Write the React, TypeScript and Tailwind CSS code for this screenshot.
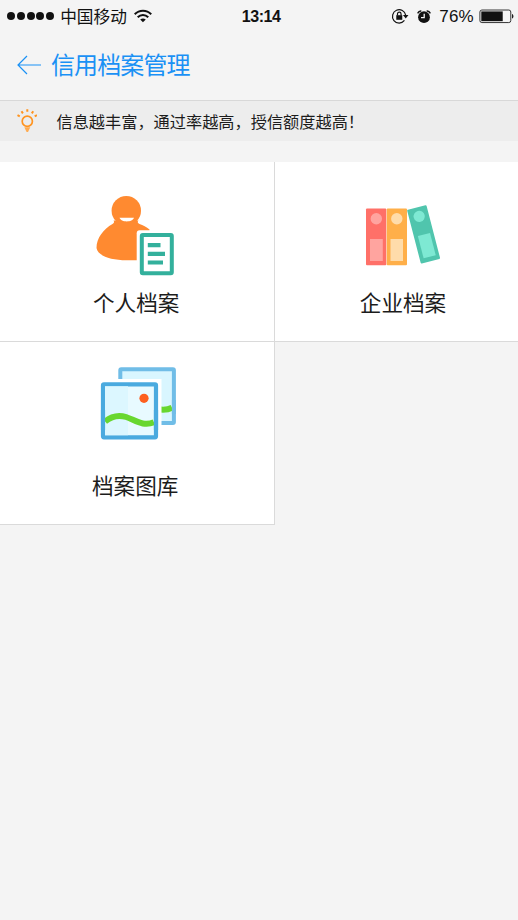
import type { ReactNode } from "react";

const PersonIcon = () => (
  <svg width="82" height="84" viewBox="94 194 82 84" fill="none">
    <circle cx="126.300" cy="210.700" r="14.700" fill="#ff8a30" />
    <path d="M113.500 220.500c1 1.500.5 2.500-1 3.500-9 5-16 14-16 24 1 7.500 14 12.300 30 12.300h23V229.500c-3-2.500-6.500-4.500-10-5.500-2-1-2.200-2-1-3.500z" fill="#ff8a30" />
    <path d="M119.500 217.700h14.500c-1.500 4.900-13 4.900-14.500 0z" fill="#fff" />
    <rect x="136.700" y="230.300" width="42" height="50" rx="3" fill="#fff" />
    <rect x="141.800" y="234.900" width="30" height="38.400" rx="1" fill="#fff" stroke="#33b09c" strokeWidth="4" strokeLinejoin="round" />
    <path d="M147.800 245.200h12.700M147.800 253.800h17.200M147.800 262.500h15.200" stroke="#33b09c" strokeWidth="4.200" />
  </svg>
);

const BindersIcon = () => (
  <svg width="78" height="64" viewBox="364 203 78 64">
    <rect x="366" y="208.600" width="20.300" height="56.600" rx="1" fill="#ff7068" />
    <rect x="386.700" y="208.600" width="20.300" height="56.600" rx="1" fill="#ffaf49" />
    <circle cx="376.300" cy="218.700" r="5.700" fill="#ffa49f" />
    <circle cx="396.800" cy="218.700" r="5.700" fill="#ffdcaa" />
    <rect x="370" y="239" width="12.800" height="22" fill="#ffa49f" />
    <rect x="390.500" y="239" width="12.500" height="22" fill="#ffdcaa" />
    <g transform="translate(407 210) rotate(-14.500)">
      <rect width="20" height="55.500" rx="1" fill="#50c5ad" />
      <circle cx="10.200" cy="9.300" r="5.600" fill="#7ee9d3" />
      <rect x="4" y="28" width="12.500" height="23" fill="#7ee9d3" />
    </g>
  </svg>
);

const GalleryIcon = () => (
  <svg width="78" height="76" viewBox="99 366 78 76" fill="none">
    <rect x="120.300" y="369.300" width="53.600" height="53.600" rx="1" fill="#d9f6ff" stroke="#70bde7" strokeWidth="4" />
    <path d="M158 409.300c6 1 10 .5 14-1.500" stroke="#68d72f" strokeWidth="6" />
    <path d="M173.900 400v14" stroke="#70bde7" strokeWidth="4" />
    <rect x="98" y="379" width="63.500" height="64" fill="#fff" />
    <rect x="103" y="384.300" width="53" height="53" rx="1" fill="#e8faff" stroke="#4aaadf" strokeWidth="4.200" />
    <path d="M105 386.300h23v49h-23z" fill="#dcf7ff" />
    <path d="M105.100 421.500c6-5 13-7 21-4.500 9 3 17 10 27.800 5.300" stroke="#68d72f" strokeWidth="6" />
    <path d="M103 410v20M156 410v20" stroke="#4aaadf" strokeWidth="4.200" />
    <circle cx="144" cy="398.300" r="4.600" fill="#fd601f" />
  </svg>
);

const BulbIcon = () => (
  <svg width="20" height="24" viewBox="17 109 20 24" fill="none" stroke="#ff9420">
    <circle cx="27.300" cy="121.300" r="5.100" strokeWidth="1.700" />
    <path d="M24.300 127.300h6l-2.300 4.700h-1.400z" fill="#ffac52" stroke="none" />
    <path d="M27.300 109.300v2.500M21.500 111.300l1.400 2.100M33.200 111.300l-1.400 2.100M17.500 115.200l2.300 1.200M37 115.200l-2.300 1.200" strokeWidth="2" />
  </svg>
);

const WifiIcon = () => (
  <svg width="18" height="14" viewBox="134 9 18 14" fill="none" stroke="#111" strokeWidth="2">
    <path d="M134.700 14.300c4.700-4.700 11.900-4.700 16.600 0M137.700 17.300c3-3 7.600-3 10.600 0" />
    <path d="M140.200 19.600c1.800-1.500 3.800-1.500 5.600 0L143 22.200z" fill="#111" stroke="none" />
  </svg>
);

const LockIcon = () => (
  <svg width="18" height="16" viewBox="391 8 18 16" fill="none" stroke="#111">
    <path d="M404.500 20.500a6.700 6.700 0 1 1 1.300-5.200" strokeWidth="1.200" />
    <path d="M403 15h5.500l-2.700 3.400z" fill="#111" stroke="none" />
    <rect x="396.300" y="15.200" width="6" height="4.600" fill="#111" stroke="none" />
    <path d="M397.500 15.500v-1.600a1.800 1.800 0 0 1 3.600 0v1.600" strokeWidth="1.200" />
  </svg>
);

const AlarmIcon = () => (
  <svg width="14" height="15" viewBox="417 8 14 15" fill="none">
    <circle cx="424" cy="16.200" r="5.900" fill="#111" />
    <path d="M418 11.900q.8-1.700 2.800-2M430 11.900q-.8-1.700-2.800-2" stroke="#111" strokeWidth="1.500" strokeLinecap="round" />
    <path d="M424.200 12.800v3.800h-3.200" stroke="#f4f4f4" strokeWidth="1.300" />
  </svg>
);

const BatteryIcon = () => (
  <svg width="36" height="16" viewBox="479 8 36 16" fill="none">
    <rect x="479.900" y="10" width="31" height="12.600" rx="2" stroke="#333" strokeWidth="1" />
    <rect x="481.300" y="11.400" width="21.500" height="9.800" fill="#111" />
    <path d="M512.200 14c1.800.6 1.800 4 0 4.600z" fill="#111" />
  </svg>
);

function StatusBar() {
  return (
    <div className="flex h-8 items-center pl-[7px] pr-[3px] text-[#111]">
      <div className="flex gap-[1.8px]">
        {[0, 1, 2, 3, 4].map((i) => (
          <span key={i} className="size-2 rounded-full bg-[#111]" />
        ))}
      </div>
      <span className="ml-[6px] w-[74px] text-[16.7px] leading-8 whitespace-nowrap">中国移动</span>
      <WifiIcon />
      <span className="ml-[90px] w-[150px] pt-0.5 font-['Liberation_Sans'] text-[16px] font-bold leading-8 tracking-[-0.5px]">13:14</span>
      <LockIcon />
      <span className="ml-2 flex">
        <AlarmIcon />
      </span>
      <span className="ml-2 w-[40px] pt-0.5 font-['Liberation_Sans'] text-[17px] leading-8 tracking-[0.2px]">76%</span>
      <BatteryIcon />
    </div>
  );
}

function Card({ icon, label, className }: { icon: ReactNode; label: string; className: string }) {
  return (
    <div className={`flex flex-col border-[#dadada] bg-white ${className}`}>
      {icon}
      <span className="text-[21.6px] leading-8">{label}</span>
    </div>
  );
}

export default function App() {
  return (
    <div className="h-[920px] w-[518px] overflow-hidden bg-[#f4f4f4] font-['Noto_Sans_CJK_SC',sans-serif] text-[#1c1c1c]">
      <StatusBar />

      <header className="flex h-[69px] items-center border-b border-[#d8d8d8] pl-[17px] text-[#1a91f5]">
        <svg width="24" height="20" viewBox="0 0 24 20" fill="none" stroke="currentColor" strokeWidth="1.200" className="-mt-0.5">
          <path d="M24 10H1M10 1L1 10l9 9" />
        </svg>
        <h1 className="ml-[10px] pb-1 text-[24px] leading-8 tracking-[-0.9px]">信用档案管理</h1>
      </header>

      <div className="flex h-10 items-center bg-[#ededed] pl-[17px]">
        <BulbIcon />
        <p className="ml-[19.5px] text-[16.2px] leading-6">信息越丰富，通过率越高，授信额度越高！</p>
      </div>

      <main className="mt-[21px] grid grid-cols-[275px_243px]">
        <Card icon={<PersonIcon />} label="个人档案" className="h-[180px] gap-2 border-r border-b pt-8 pl-[94px] -indent-px" />
        <Card icon={<BindersIcon />} label="企业档案" className="h-[180px] items-center gap-[19px] border-b pt-[41px] pl-[13px]" />
        <Card icon={<GalleryIcon />} label="档案图库" className="h-[183px] gap-[27px] border-r border-b pt-6 pl-[99px] -indent-[7px]" />
      </main>
    </div>
  );
}
